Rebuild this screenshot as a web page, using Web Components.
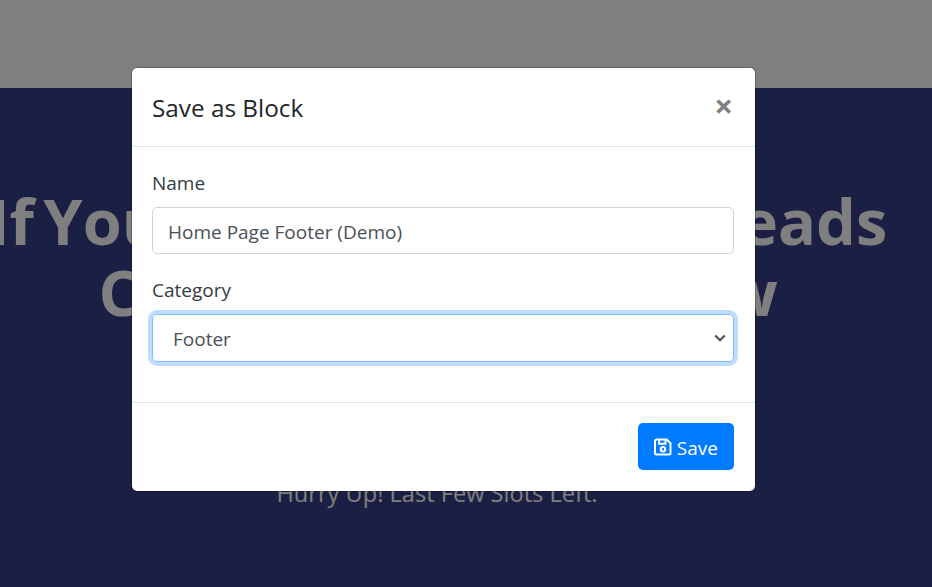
<!DOCTYPE html>
<html><head><meta charset="utf-8">
<style>
html,body{margin:0;padding:0;height:100%;overflow:hidden}
body{font-family:"Open Sans","Noto Sans",sans-serif}
</style></head><body>
<landing-page>
  <h-line slot="headline" first="If" rest="You Want More New Leads" second="Contact Us Right Now"></h-line>
  <span slot="sub">Hurry Up! Last Few Slots Left.</span>
</landing-page>
<save-modal></save-modal>
<template id="tp">
<style>
:host{display:block;width:932px;height:587px;background:#363e86;overflow:hidden}
.top{height:88px;background:#fff}
.hero{display:flex;flex-direction:column;align-items:center;padding-top:97px;color:#fff;text-align:center}
.sub{margin-top:151px;font:400 23.6px/30px "Open Sans","Noto Sans",sans-serif;color:#fff;margin-left:-58px;white-space:nowrap}
</style>
<div class="top"></div>
<div class="hero"><slot name="headline"></slot><div class="sub"><slot name="sub"></slot></div></div>
</template>
<script>
class LandingPage extends HTMLElement{constructor(){super();this.attachShadow({mode:'open'}).append(document.getElementById('tp').content.cloneNode(true));}}
class HLine extends HTMLElement{constructor(){super();const r=this.attachShadow({mode:'open'});
r.innerHTML=`<style>:host{display:block;font:700 63px/71px "Open Sans","Noto Sans",sans-serif;white-space:nowrap;width:932px;text-align:center}.a{margin-left:-56px;word-spacing:.6px}.a span{word-spacing:-7px}.b{margin-left:-56px;word-spacing:-1.3px}</style><div class="a"><span>${this.getAttribute('first')} </span>${this.getAttribute('rest')}</div><div class="b">${this.getAttribute('second')}</div>`;}}
class FormField extends HTMLElement{constructor(){super();const r=this.attachShadow({mode:'open'});
r.innerHTML=`<style>:host{display:block;margin-bottom:23px}
label{display:block;font-size:19px;line-height:27px;color:#343a40;margin-bottom:10px}
</style><label>${this.getAttribute('label')}</label><slot></slot>`;}}
class TextBox extends HTMLElement{constructor(){super();const r=this.attachShadow({mode:'open'});
r.innerHTML=`<style>:host{display:block;box-sizing:border-box;height:47px;border:1px solid #ced4da;border-radius:5px;padding:2px 15px 0;font-size:19px;line-height:45px;color:#495057;white-space:nowrap}</style><slot></slot>`;}}
class SelectBox extends HTMLElement{constructor(){super();const r=this.attachShadow({mode:'open'});
r.innerHTML=`<style>:host{display:flex;align-items:center;justify-content:space-between;box-sizing:border-box;height:48px;border:1px solid #80bdff;border-radius:5px;box-shadow:0 0 0 4px rgba(0,123,255,.25);padding:0 7px 0 20px;font-size:19px;color:#495057}svg{display:block}span{padding-top:2px}</style><span><slot></slot></span><svg width="12" height="8" viewBox="0 0 12 8"><path d="M1.2 1.5 6 6.3l4.8-4.8" fill="none" stroke="#495057" stroke-width="2"/></svg>`;}}
class SaveButton extends HTMLElement{constructor(){super();const r=this.attachShadow({mode:'open'});
r.innerHTML=`<style>:host{display:inline-flex;align-items:center;gap:5px;box-sizing:border-box;height:47px;padding:0 16px;background:#007bff;border-radius:5px;color:#fff;font-size:19px}svg{display:block;margin-top:1px}span{padding-top:4px}</style><svg width="18" height="18" viewBox="0 0 18 18" fill="none" stroke="#fff" stroke-width="2"><path d="M2.5 1.5h10.2l3.8 3.8v9.7a1.5 1.5 0 0 1-1.5 1.5H2.5A1.5 1.5 0 0 1 1 15V3a1.5 1.5 0 0 1 1.5-1.5z" stroke-linejoin="round"/><path d="M5 2v3.8h6.5V2"/><circle cx="9" cy="11.3" r="2.2"/></svg><span><slot></slot></span>`;}}
class SaveModal extends HTMLElement{constructor(){super();const r=this.attachShadow({mode:'open'});
r.innerHTML=`<style>
:host{position:absolute;inset:0;background:rgba(0,0,0,.5);display:block}
.dialog{position:absolute;left:131px;top:67px;width:625px;height:425px;box-sizing:border-box;background:#fff;background-clip:padding-box;border:1px solid rgba(0,0,0,.2);border-radius:6px;display:flex;flex-direction:column;font-family:"Open Sans","Noto Sans",sans-serif}
header{height:79px;box-sizing:border-box;border-bottom:1px solid #dee2e6;display:flex;align-items:center;justify-content:space-between;padding:0 20px}
h5{margin:0;font-size:24.3px;font-weight:500;color:#212529}
.x{font-size:33px;font-weight:700;color:#808080;line-height:1;margin-top:-4px;padding-right:2px}
main{flex:1;padding:23px 21px 0 20px}
footer{height:89px;box-sizing:border-box;border-top:1px solid #dee2e6;display:flex;align-items:center;justify-content:flex-end;padding:0 21px 2px 20px}
</style><div class="dialog"><header><h5>Save as Block</h5><span class="x">×</span></header>
<main><form-field label="Name"><text-box>Home Page Footer (Demo)</text-box></form-field><form-field label="Category"><select-box>Footer</select-box></form-field></main>
<footer><save-button>Save</save-button></footer></div>`;}}
customElements.define('landing-page',LandingPage);
customElements.define('h-line',HLine);
customElements.define('form-field',FormField);
customElements.define('text-box',TextBox);
customElements.define('select-box',SelectBox);
customElements.define('save-button',SaveButton);
customElements.define('save-modal',SaveModal);
</script>
</body></html>
